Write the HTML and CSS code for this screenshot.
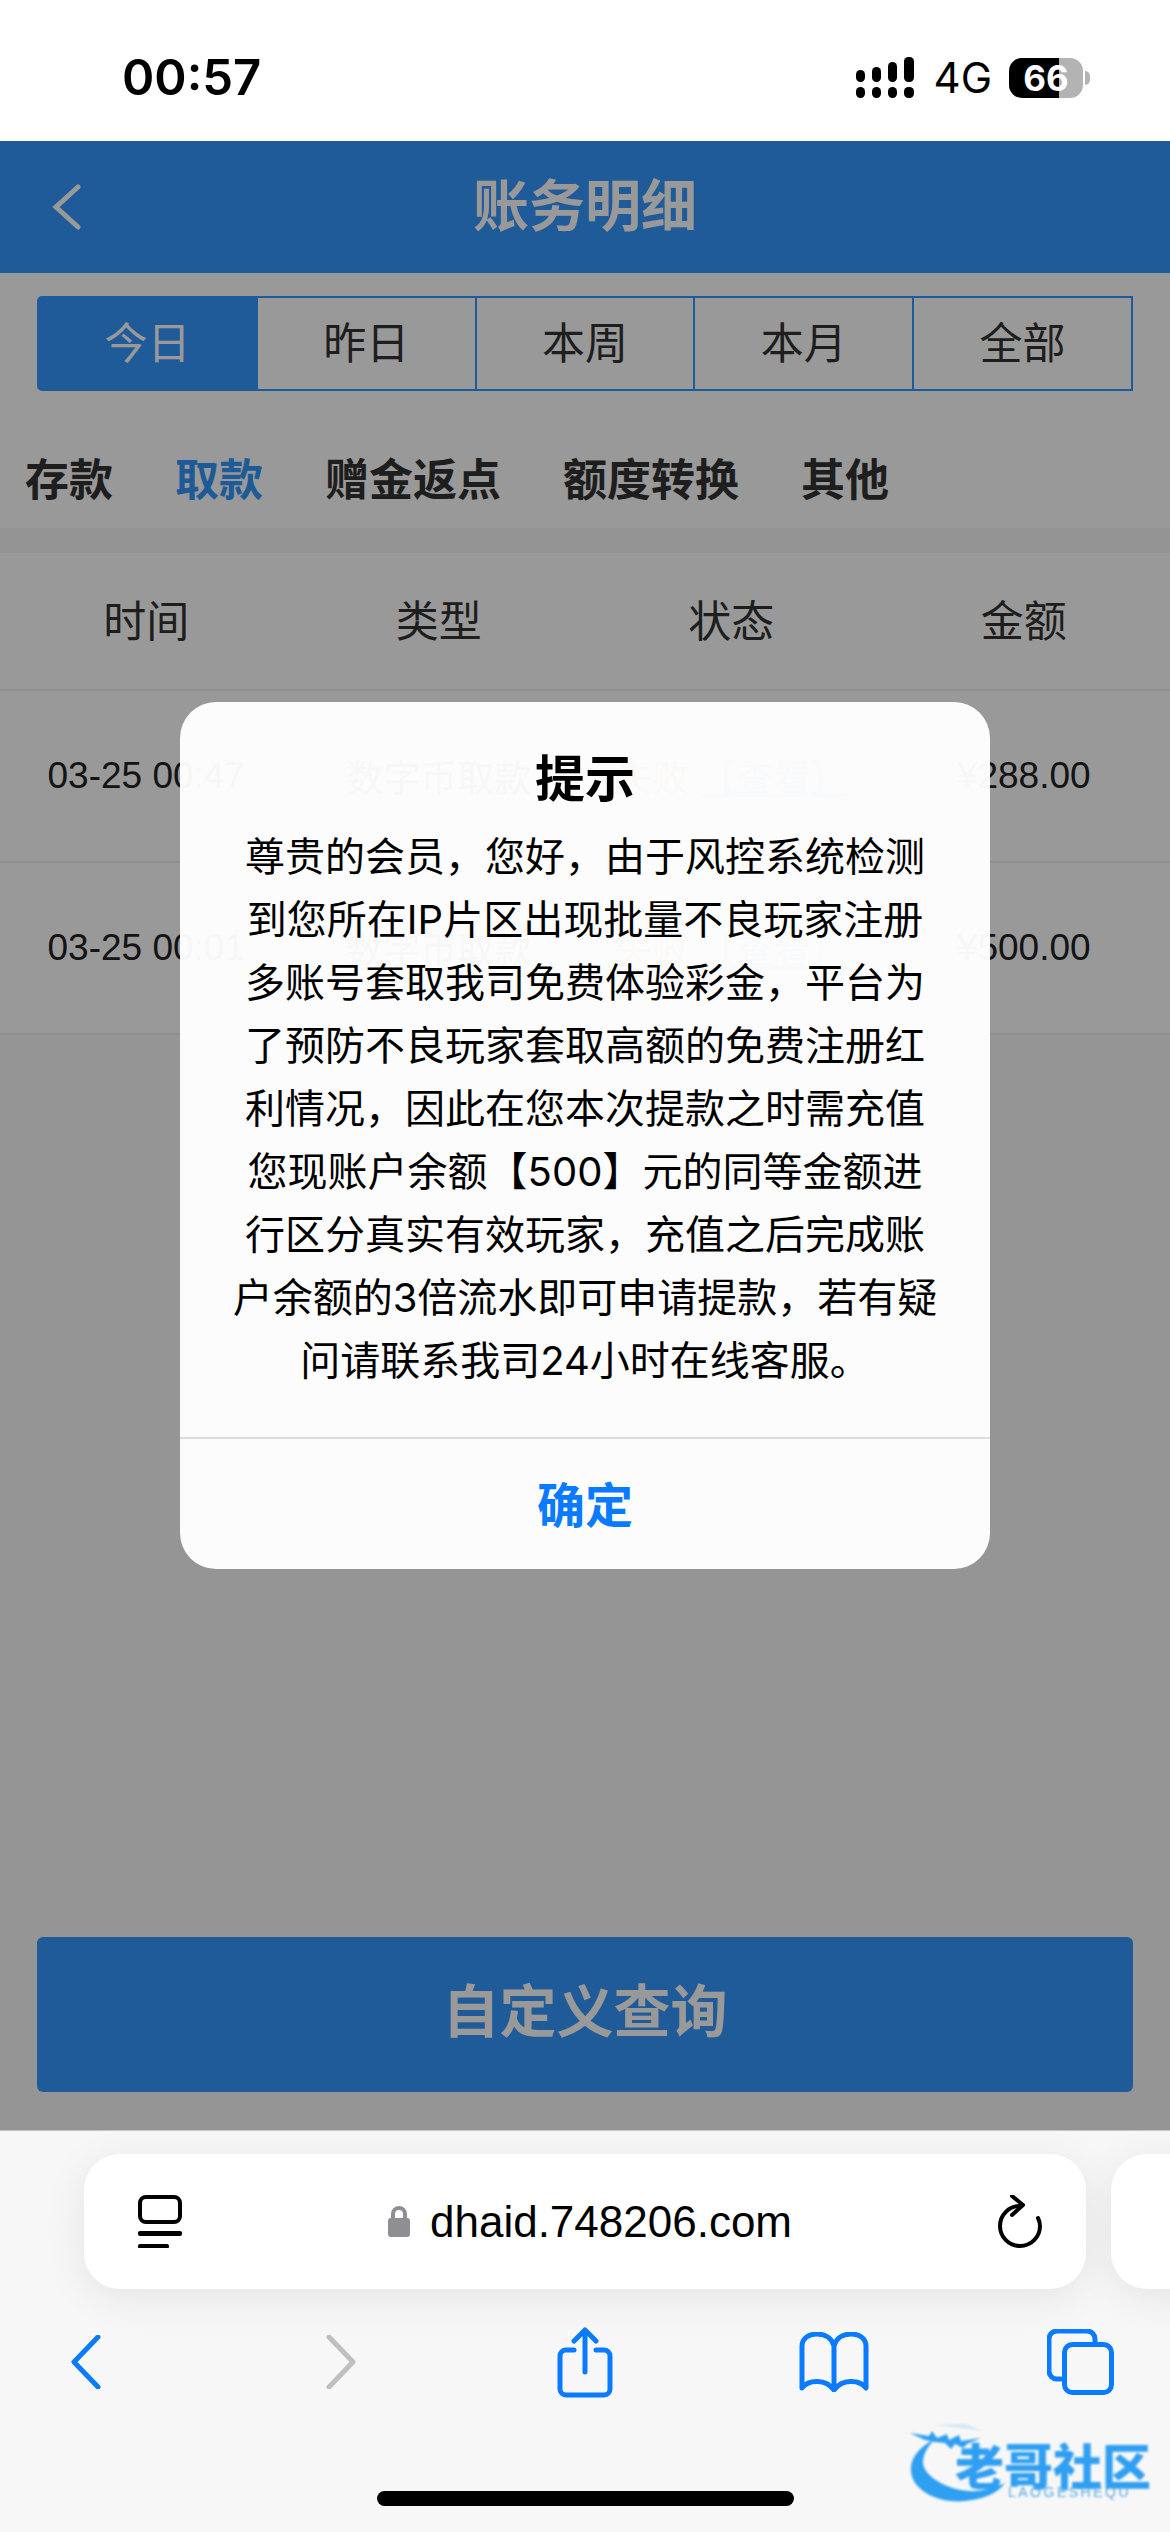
FILE: index.html
```html
<!DOCTYPE html>
<html lang="zh-CN">
<head>
    <meta charset="UTF-8">
    <meta name="viewport" content="width=device-width, initial-scale=1.0">
    <title>账务明细</title>
    <link rel="stylesheet" href="styles.css">
</head>
<body>
    <div class="status-bar">
        <span class="clock">00:57</span>
        <div class="status-right">
            <svg class="signal" width="58" height="41" viewBox="0 0 58 41">
                <rect x="0" y="13" width="9" height="12" rx="4.5"/>
                <rect x="16" y="10" width="9" height="15" rx="4.5"/>
                <rect x="32" y="5" width="9" height="20" rx="4.5"/>
                <rect x="48" y="0" width="10" height="25" rx="4.5"/>
                <rect x="0" y="30" width="9" height="11" rx="4.5"/>
                <rect x="16" y="30" width="9" height="11" rx="4.5"/>
                <rect x="32" y="30" width="9" height="11" rx="4.5"/>
                <rect x="48" y="30" width="10" height="11" rx="4.5"/>
            </svg>
            <span class="network">4G</span>
            <div class="battery">66</div>
        </div>
    </div>

    <div class="page">
        <header class="top-bar">
            <svg class="back" width="30" height="46" viewBox="0 0 30 46">
                <path d="M26 3 L4 23 L26 43"/>
            </svg>
            <h1>账务明细</h1>
        </header>

        <div class="filters">
            <div class="segments">
                <div class="segment active">今日</div>
                <div class="segment">昨日</div>
                <div class="segment">本周</div>
                <div class="segment">本月</div>
                <div class="segment">全部</div>
            </div>
        </div>

        <nav class="tabs">
            <span>存款</span>
            <span class="current">取款</span>
            <span>赠金返点</span>
            <span>额度转换</span>
            <span>其他</span>
        </nav>

        <div class="band"></div>

        <div class="table">
            <div class="row head">
                <div>时间</div>
                <div>类型</div>
                <div>状态</div>
                <div>金额</div>
            </div>
            <div class="row">
                <div>03-25 00:47</div>
                <div>数字币取款</div>
                <div><span class="failed">失败</span> <a class="detail">【查看】</a></div>
                <div>¥288.00</div>
            </div>
            <div class="row">
                <div>03-25 00:01</div>
                <div>数字币取款</div>
                <div><span class="failed">失败</span> <a class="detail">【查看】</a></div>
                <div>¥500.00</div>
            </div>
        </div>

        <button class="query-btn">自定义查询</button>

        <div class="overlay">
            <div class="modal">
                <div class="modal-body">
                    <h2>提示</h2>
                    <p>尊贵的会员，您好，由于风控系统检测到您所在IP片区出现批量不良玩家注册多账号套取我司免费体验彩金，平台为了预防不良玩家套取高额的免费注册红利情况，因此在您本次提款之时需充值您现账户余额【500】元的同等金额进行区分真实有效玩家，充值之后完成账户余额的3倍流水即可申请提款，若有疑问请联系我司24小时在线客服。</p>
                </div>
                <div class="modal-footer">确定</div>
            </div>
        </div>
    </div>

    <div class="safari">
        <div class="url-row">
            <div class="url-bar">
                <svg width="44" height="53" viewBox="0 0 44 53" class="dark-icon">
                    <rect x="2" y="2" width="40" height="25" rx="6" class="line"/>
                    <rect x="0" y="36" width="44" height="5" rx="2" class="solid"/>
                    <rect x="0" y="49" width="31" height="4.5" rx="2" class="solid"/>
                </svg>
                <div class="address">
                    <svg width="22" height="31" viewBox="0 0 22 31">
                        <path d="M5 13 V8 a6 6 0 0 1 12 0 V13" class="lock-arc"/>
                        <rect x="0" y="12" width="22" height="19" rx="3" class="lock-body"/>
                    </svg>
                    <span>dhaid.748206.com</span>
                </div>
                <svg width="44" height="53" viewBox="0 0 44 53" class="dark-icon">
                    <path d="M22 11 A20 20 0 1 0 42 31 C42 27 41 25 40 23" class="line"/>
                    <path d="M14 1 L25 10 L14 20" class="line"/>
                </svg>
            </div>
            <div class="next-card"></div>
        </div>

        <div class="toolbar">
            <div class="tool">
                <svg width="30" height="54" viewBox="0 0 30 54" class="blue-icon">
                    <path d="M27 2 L3 27 L27 52"/>
                </svg>
            </div>
            <div class="tool forward">
                <svg width="30" height="54" viewBox="0 0 30 54" class="gray-icon">
                    <path d="M3 2 L27 27 L3 52"/>
                </svg>
            </div>
            <div class="tool share">
                <svg width="56" height="71" viewBox="0 0 56 71" class="blue-icon">
                    <path d="M17 23 H9 a6 6 0 0 0 -6 6 V62 a6 6 0 0 0 6 6 H47 a6 6 0 0 0 6 -6 V29 a6 6 0 0 0 -6 -6 H39"/>
                    <path d="M28 45 V3 M17 14 L28 3 L39 14"/>
                </svg>
            </div>
            <div class="tool share">
                <svg width="70" height="60" viewBox="0 0 70 60" class="blue-icon">
                    <path d="M35 14 C33 6 26 2 18 2 C9 2 3 7 3 14 V56 C10 47 27 47 35 58 C43 47 60 47 67 56 V14 C67 7 61 2 52 2 C44 2 37 6 35 14 V58"/>
                </svg>
            </div>
            <div class="tool">
                <svg width="67" height="66" viewBox="0 0 67 66" class="blue-icon">
                    <path d="M14 50 H10 a8 8 0 0 1 -8 -8 V10 a8 8 0 0 1 8 -8 H40 a8 8 0 0 1 8 8 V13"/>
                    <rect x="17.5" y="15.5" width="47" height="48" rx="8"/>
                </svg>
            </div>
        </div>

        <div class="home-bar"></div>

        <div class="watermark">
            <svg width="110" height="90" viewBox="0 0 110 90">
                <path d="M30 23 C12 32 5 44 6 55 C7 75 35 88 60 85 C80 83 93 77 100 67 C85 74 70 77 56 74 C35 70 17 57 18 45 C19 36 24 29 30 23 Z"/>
                <path d="M5 17 L24 20 L27 15 L32 22 L42 18 L44 24 L54 19 L56 25 L76 22 L62 28 L58 32 L50 28 L46 33 L40 27 L30 26 L20 24 Z"/>
                <path d="M30 9 L60 8 L78 15 L58 12 Z" class="wm-hair"/>
            </svg>
            <div class="wm-name">老哥社区</div>
            <div class="wm-sub">LAOGESHEQU</div>
        </div>
    </div>
</body>
</html>
```

FILE: styles.css
```css
* {
    margin: 0;
    padding: 0;
    box-sizing: border-box;
}

body {
    width: 1170px;
    height: 2532px;
    overflow: hidden;
    display: flex;
    flex-direction: column;
    background: #fff;
    color: #000;
    font-family: "Liberation Sans", "Noto Sans CJK SC", sans-serif;
}

/* status bar */
.status-bar {
    height: 141px;
    flex-shrink: 0;
    display: flex;
    align-items: center;
    justify-content: space-between;
    padding: 14px 79px 0 122px;
}

.clock {
    font-family: Inter, sans-serif;
    font-size: 49px;
    font-weight: 600;
}

.status-right {
    display: flex;
    align-items: center;
    gap: 17px;
}

.signal {
    fill: #000;
    margin-right: 3px;
}

.network {
    font-family: Inter, sans-serif;
    font-size: 42px;
    line-height: 42px;
}

.battery {
    position: relative;
    width: 74px;
    height: 40px;
    margin-right: 8px;
    border-radius: 13px;
    background: linear-gradient(to right, #000 50px, #b3b3b3 50px);
    color: #fff;
    font-family: Inter, sans-serif;
    font-size: 35px;
    font-weight: 700;
    line-height: 40px;
    text-align: center;
}

.battery::after {
    content: "";
    position: absolute;
    left: 76px;
    top: 13px;
    width: 5px;
    height: 14px;
    border-radius: 0 7px 7px 0;
    background: #b3b3b3;
}

/* page under the dialog */
.page {
    position: relative;
    height: 1989px;
    flex-shrink: 0;
    display: flex;
    flex-direction: column;
    background: #f8f8f8;
}

.top-bar {
    height: 132px;
    display: grid;
    grid-template-columns: 1fr auto 1fr;
    align-items: center;
    padding-left: 52px;
    background: #3496ff;
    color: #fff;
}

.top-bar h1 {
    font-size: 56px;
    font-weight: 700;
    line-height: 1;
    transform: translateX(-26px);
}

.back {
    fill: none;
    stroke: #fff;
    stroke-width: 5;
    stroke-linecap: round;
}

.filters {
    padding: 23px 37px 0;
    background: #fff;
}

.segments {
    display: flex;
    height: 95px;
}

.segment {
    flex: 1;
    display: flex;
    align-items: center;
    justify-content: center;
    padding-bottom: 8px;
    border: 2px solid #3496ff;
    border-left-width: 0;
    color: #333;
    font-size: 43px;
}

.segment:first-child {
    border-radius: 5px 0 0 5px;
    border-left-width: 2px;
}

.segment.active {
    background: #3496ff;
    color: #fff;
}

.tabs {
    display: flex;
    gap: 62px;
    padding: 59px 0 16px 25px;
    background: #fff;
    color: #333;
    font-size: 44px;
    font-weight: 700;
    line-height: 62px;
}

.tabs .current {
    color: #3296fa;
}

.band {
    height: 25px;
    background: #f7f7f7;
}

.table {
    background: #fff;
}

.row {
    display: grid;
    grid-template-columns: repeat(4, 1fr);
    align-items: center;
    height: 172px;
    border-bottom: 2px solid #eee;
    text-align: center;
    font-size: 37px;
    color: #222;
}

.row.head {
    height: 138px;
    padding-bottom: 6px;
    font-size: 43px;
    color: #333;
}

.failed {
    color: #f33;
}

.detail {
    color: #3296fa;
    text-decoration: underline;
}

.query-btn {
    margin: auto 37px 38px;
    height: 155px;
    padding-bottom: 16px;
    border: none;
    border-radius: 6px;
    background: #3496ff;
    color: #fff;
    font-family: inherit;
    font-size: 57px;
    font-weight: 700;
}

/* dialog */
.overlay {
    position: absolute;
    inset: 0;
    display: flex;
    align-items: center;
    justify-content: center;
    background: rgba(0, 0, 0, 0.4);
}

.modal {
    width: 810px;
    border-radius: 36px;
    background: rgba(255, 255, 255, 0.97);
}

.modal-body {
    padding: 43px 50px 45px;
    text-align: center;
}

.modal-body h2 {
    font-size: 50px;
    font-weight: 600;
    line-height: 70px;
    margin-bottom: 10px;
}

.modal-body p {
    font-family: Inter, "Noto Sans CJK SC", sans-serif;
    font-size: 40px;
    line-height: 63px;
}

.modal-footer {
    height: 132px;
    display: flex;
    align-items: center;
    justify-content: center;
    padding-bottom: 5px;
    border-top: 2px solid #ddd;
    color: #0a7aff;
    font-size: 48px;
    font-weight: 600;
}

/* browser chrome */
.safari {
    position: relative;
    flex: 1;
    display: flex;
    flex-direction: column;
    overflow: hidden;
    border-top: 1px solid #c4c4c4;
    background: #f7f7f7;
}

.url-row {
    display: flex;
    gap: 25px;
    margin-top: 23px;
    padding-left: 84px;
}

.url-bar {
    width: 1002px;
    height: 135px;
    flex-shrink: 0;
    display: flex;
    align-items: center;
    justify-content: space-between;
    padding: 0 44px 0 54px;
    border-radius: 36px;
    background: #fff;
    box-shadow: 0 8px 40px rgba(0, 0, 0, 0.08);
}

.next-card {
    width: 200px;
    flex-shrink: 0;
    border-radius: 36px;
    background: #fff;
    box-shadow: 0 8px 40px rgba(0, 0, 0, 0.08);
}

.address {
    display: flex;
    align-items: center;
    gap: 20px;
    font-size: 44px;
    color: #000;
}

.lock-arc {
    fill: none;
    stroke: #8e8e93;
    stroke-width: 4;
}

.lock-body {
    fill: #8e8e93;
}

.dark-icon .line {
    fill: none;
    stroke: #000;
    stroke-width: 4;
    stroke-linecap: round;
    stroke-linejoin: round;
}

.dark-icon .solid {
    fill: #000;
}

.toolbar {
    display: flex;
    justify-content: space-between;
    height: 74px;
    margin-top: 36px;
    padding: 0 40px 0 36px;
}

.tool {
    width: 100px;
    display: flex;
    align-items: center;
    justify-content: center;
}

.tool.forward svg {
    margin-left: 12px;
}

.tool.share svg {
    margin-left: 4px;
}

.blue-icon,
.gray-icon {
    fill: none;
    stroke-width: 5;
    stroke-linecap: round;
    stroke-linejoin: round;
}

.blue-icon {
    stroke: #0a7aff;
}

.gray-icon {
    stroke: #bfbfbf;
}

.home-bar {
    width: 417px;
    height: 15px;
    margin: 92px auto 0;
    border-radius: 8px;
    background: #000;
}

.watermark {
    position: absolute;
    left: 905px;
    top: 285px;
    width: 250px;
    height: 90px;
    filter: blur(1px);
}

.watermark svg {
    position: absolute;
    left: 0;
    top: 0;
    fill: #2f9ff2;
}

.watermark .wm-hair {
    fill: #cfe6f8;
}

.wm-name {
    position: absolute;
    left: 50px;
    top: 24px;
    color: #2f9ff2;
    font-size: 49px;
    font-weight: 900;
    line-height: 56px;
    white-space: nowrap;
}

.wm-sub {
    position: absolute;
    left: 103px;
    top: 68px;
    color: #5aa9e0;
    font-size: 14px;
    letter-spacing: 2.5px;
    line-height: 16px;
    white-space: nowrap;
}
```
